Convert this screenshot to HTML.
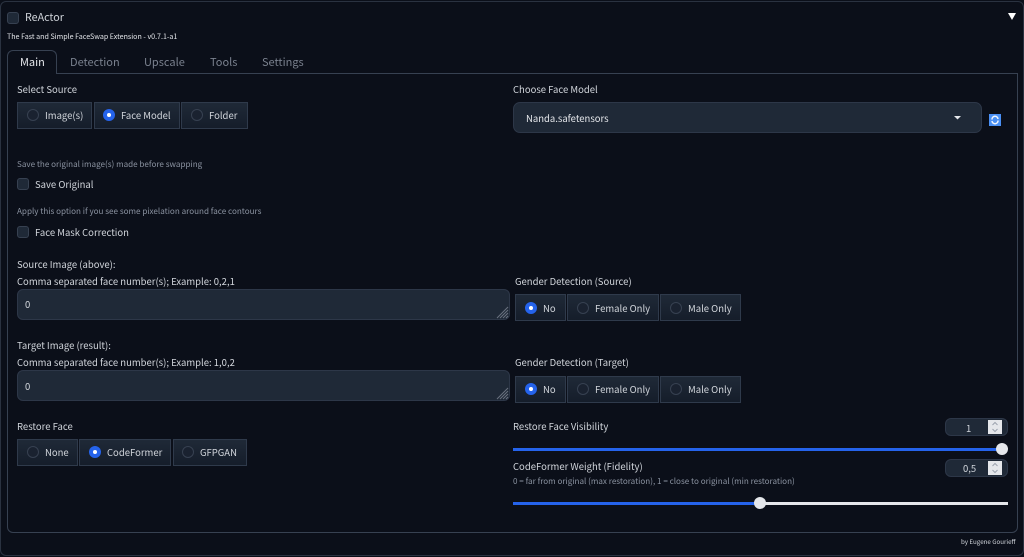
<!DOCTYPE html>
<html><head><meta charset="utf-8"><style>
html,body{margin:0;padding:0;background:#0b0f19}
body{width:1024px;height:557px;position:relative;overflow:hidden;font-family:"Noto Sans CJK JP","Liberation Sans",sans-serif;color:#d1d5db;font-size:9.5px;line-height:14px}
#w{position:absolute;left:0;top:0;width:1024px;height:557px;filter:blur(.3px)}
.t{position:absolute;white-space:nowrap}
.b{position:absolute;box-sizing:border-box}
.h{color:#8b93a1;font-size:8.1px}
.r{position:absolute;box-sizing:border-box;height:27px;background:linear-gradient(#1f2937,#151d2a);border:1px solid #2f3a4b}
.c{position:absolute;box-sizing:border-box;width:12px;height:12px;border-radius:50%;background:#1a2230;border:1px solid #374151}
.c.on{background:#2563eb;border:none}
.c.on:after{content:"";position:absolute;left:4px;top:4px;width:4px;height:4px;border-radius:50%;background:#fff}
.k{position:absolute;box-sizing:border-box;width:12px;height:12px;border-radius:3px;background:#1f2937;border:1px solid #374151}
.i{position:absolute;box-sizing:border-box;background:#1f2937;border:1px solid #2d3748;border-radius:6px}
.n{position:absolute;box-sizing:border-box;left:945px;width:63px;height:18px;background:#1f2937;border:1px solid #2d3748;border-radius:6px}
.s{position:absolute;left:988px;width:14px;height:14px;background:#e5e7eb}
</style></head><body><div id="w">
<div class="b" style="left:0;top:1px;width:1024px;height:555px;border:1px solid #2a3240;border-radius:6px"></div>
<div class="k" style="left:7px;top:12px"></div>
<div class="t" style="left:25px;top:11px;font-size:10.7px">ReActor</div>
<svg class="b" style="left:1007px;top:12px" width="10" height="9"><path d="M1 1H9L5 8Z" fill="#fff"/></svg>
<div class="t" style="left:7px;top:30px;font-size:7.1px;color:#e5e7eb">The Fast and Simple FaceSwap Extension - v0.7.1-a1</div>

<div class="b" style="left:7px;top:73px;width:1011px;height:460px;border:1px solid #374151;border-radius:0 0 6px 6px"></div>
<div class="b" style="left:7px;top:50px;width:50px;height:24px;background:#0b0f19;border:1px solid #374151;border-bottom:none;border-radius:6px 6px 0 0"></div>
<div class="t" style="left:20px;top:55px;font-size:11px;color:#e5e7eb">Main</div>
<div class="t" style="left:70px;top:55px;font-size:11px;color:#7a818e">Detection</div>
<div class="t" style="left:144px;top:55px;font-size:11px;color:#7a818e">Upscale</div>
<div class="t" style="left:210px;top:55px;font-size:11px;color:#7a818e">Tools</div>
<div class="t" style="left:262px;top:55px;font-size:11px;color:#7a818e">Settings</div>

<div class="t" style="left:17px;top:82px">Select Source</div>
<div class="r" style="left:17px;top:102px;width:75px"></div><div class="c" style="left:27px;top:109px"></div><div class="t" style="left:45px;top:108px">Image(s)</div>
<div class="r" style="left:94px;top:102px;width:86px"></div><div class="c on" style="left:103px;top:109px"></div><div class="t" style="left:121px;top:108px">Face Model</div>
<div class="r" style="left:181px;top:102px;width:67px"></div><div class="c" style="left:191px;top:109px"></div><div class="t" style="left:209px;top:108px">Folder</div>

<div class="t" style="left:513px;top:82px">Choose Face Model</div>
<div class="i" style="left:513px;top:102px;width:469px;height:31px;border-radius:7px"></div>
<div class="t" style="left:526px;top:111px;color:#e5e7eb">Nanda.safetensors</div>
<svg class="b" style="left:953px;top:115px" width="9" height="5"><path d="M1 1H8L4.500 4.500Z" fill="#e5e7eb"/></svg>
<svg class="b" style="left:989px;top:114px" width="12" height="12"><rect width="12" height="12" fill="#4a90f5"/><path d="M3 5.500A3 3 0 0 1 9 5M9 6.500A3 3 0 0 1 3 7" fill="none" stroke="#f0f6ff" stroke-width="1.500"/></svg>

<div class="t h" style="left:17px;top:158px">Save the original image(s) made before swapping</div>
<div class="k" style="left:17px;top:178px"></div>
<div class="t" style="left:35px;top:177px">Save Original</div>
<div class="t h" style="left:17px;top:205px">Apply this option if you see some pixelation around face contours</div>
<div class="k" style="left:17px;top:226px"></div>
<div class="t" style="left:35px;top:225px">Face Mask Correction</div>

<div class="t" style="left:17px;top:257px">Source Image (above):</div>
<div class="t" style="left:17px;top:274px">Comma separated face number(s); Example: 0,2,1</div>
<div class="i" style="left:17px;top:289px;width:493px;height:31px"></div>
<div class="t" style="left:25px;top:297px">0</div>
<svg class="b" style="left:496px;top:306px" width="13" height="13"><path d="M1 12L12 1M4 12L12 4M7 12L12 7M10 12L12 10" stroke="#6b7280" stroke-width="1"/></svg>

<div class="t" style="left:515px;top:274px">Gender Detection (Source)</div>
<div class="r" style="left:515px;top:294px;width:51px"></div><div class="c on" style="left:525px;top:302px"></div><div class="t" style="left:543px;top:301px">No</div>
<div class="r" style="left:567px;top:294px;width:92px"></div><div class="c" style="left:577px;top:302px"></div><div class="t" style="left:595px;top:301px">Female Only</div>
<div class="r" style="left:660px;top:294px;width:81px"></div><div class="c" style="left:670px;top:302px"></div><div class="t" style="left:688px;top:301px">Male Only</div>

<div class="t" style="left:17px;top:338px">Target Image (result):</div>
<div class="t" style="left:17px;top:355px">Comma separated face number(s); Example: 1,0,2</div>
<div class="i" style="left:17px;top:370px;width:493px;height:31px"></div>
<div class="t" style="left:25px;top:379px">0</div>
<svg class="b" style="left:496px;top:387px" width="13" height="13"><path d="M1 12L12 1M4 12L12 4M7 12L12 7M10 12L12 10" stroke="#6b7280" stroke-width="1"/></svg>

<div class="t" style="left:515px;top:355px">Gender Detection (Target)</div>
<div class="r" style="left:515px;top:376px;width:51px"></div><div class="c on" style="left:525px;top:383px"></div><div class="t" style="left:543px;top:382px">No</div>
<div class="r" style="left:567px;top:376px;width:92px"></div><div class="c" style="left:577px;top:383px"></div><div class="t" style="left:595px;top:382px">Female Only</div>
<div class="r" style="left:660px;top:376px;width:81px"></div><div class="c" style="left:670px;top:383px"></div><div class="t" style="left:688px;top:382px">Male Only</div>

<div class="t" style="left:17px;top:419px">Restore Face</div>
<div class="r" style="left:17px;top:439px;width:61px"></div><div class="c" style="left:27px;top:446px"></div><div class="t" style="left:45px;top:445px">None</div>
<div class="r" style="left:79px;top:439px;width:92px"></div><div class="c on" style="left:89px;top:446px"></div><div class="t" style="left:107px;top:445px">CodeFormer</div>
<div class="r" style="left:173px;top:439px;width:74px"></div><div class="c" style="left:182px;top:446px"></div><div class="t" style="left:200px;top:445px">GFPGAN</div>

<div class="t" style="left:513px;top:419px">Restore Face Visibility</div>
<div class="n" style="top:418px"></div><div class="t" style="left:966px;top:421px">1</div><div class="s" style="top:420px"></div>
<svg class="b" style="left:988px;top:420px" width="14" height="14"><path d="M4.500 5L7 2.500L9.500 5M4.500 9L7 11.500L9.500 9" fill="none" stroke="#9ca3af"/></svg>
<div class="b" style="left:513px;top:448px;width:489px;height:3px;background:#2563eb"></div>
<div class="b" style="left:996px;top:443px;width:12px;height:12px;border-radius:50%;background:#e5e7eb"></div>

<div class="t" style="left:513px;top:459px">CodeFormer Weight (Fidelity)</div>
<div class="t h" style="left:513px;top:475px">0 = far from original (max restoration), 1 = close to original (min restoration)</div>
<div class="n" style="top:459px"></div><div class="t" style="left:963px;top:461px">0,5</div><div class="s" style="top:461px"></div>
<svg class="b" style="left:988px;top:461px" width="14" height="14"><path d="M4.500 5L7 2.500L9.500 5M4.500 9L7 11.500L9.500 9" fill="none" stroke="#9ca3af"/></svg>
<div class="b" style="left:513px;top:502px;width:495px;height:3px;background:#e5e7eb"></div>
<div class="b" style="left:513px;top:502px;width:245px;height:3px;background:#2563eb"></div>
<div class="b" style="left:754px;top:497px;width:12px;height:12px;border-radius:50%;background:#e5e7eb"></div>

<div class="t" style="left:961px;top:535px;font-size:6.2px;color:#d1d5db">by Eugene Gourieff</div>
</div></body></html>
